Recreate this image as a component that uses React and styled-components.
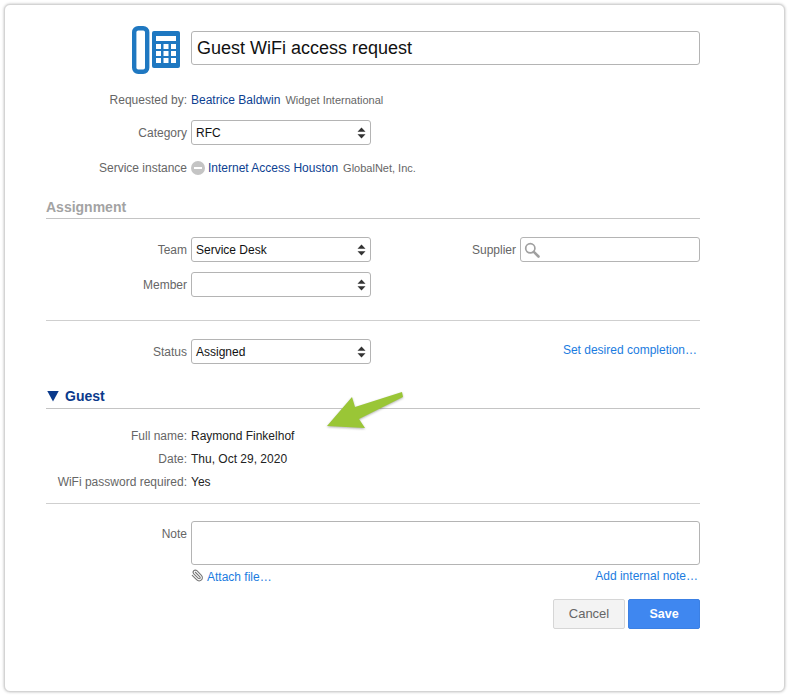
import React from 'react';
import styled, { createGlobalStyle } from 'styled-components';
import { Paperclip } from 'lucide-react';

const GlobalStyle = createGlobalStyle`
  html, body {
    margin: 0;
    background: #fff;
    font-family: "Liberation Sans", Arial, sans-serif;
    font-size: 12px;
    color: #222;
  }
`;

const Page = styled.div`
  padding: 4px;
  width: 790px;
  box-sizing: border-box;
`;

const Card = styled.div`
  position: relative;
  box-sizing: border-box;
  width: 781px;
  height: 688px;
  padding: 21px 0 0 41px;
  background: #fff;
  border: 1px solid #d4d4d4;
  border-radius: 6px;
  box-shadow: 0 0 3px rgba(0, 0, 0, 0.28);
`;

const Content = styled.div`
  width: 654px;
`;

const TitleRow = styled.div`
  display: flex;
  align-items: flex-start;
  padding-left: 86px;
  gap: 11px;
`;

const TitleInput = styled.div`
  flex: 1;
  box-sizing: border-box;
  height: 34px;
  margin-top: 5px;
  padding: 0 5px;
  display: flex;
  align-items: center;
  border: 1px solid #b4b4b4;
  border-radius: 3px;
  font-size: 18px;
  color: #111;
`;

const Row = styled.div`
  display: flex;
  align-items: ${(p) => p.$align || 'center'};
  min-height: 20px;
  margin-top: ${(p) => p.$top}px;
`;

const Label = styled.div`
  flex: none;
  width: 141px;
  margin-right: 4px;
  padding-top: ${(p) => p.$drop || 0}px;
  text-align: right;
  color: #666;
  line-height: 20px;
  white-space: nowrap;
`;

const StrongLink = styled.span`
  color: #0d4191;
`;

const Org = styled.span`
  margin-left: 5px;
  font-size: 11px;
  color: #666;
`;

const SelectBox = styled.div`
  box-sizing: border-box;
  width: 180px;
  height: 25px;
  padding: 0 4px;
  display: flex;
  align-items: center;
  justify-content: space-between;
  background: #fff;
  border: 1px solid #b4b4b4;
  border-radius: 3px;
  color: #111;
`;

const SectionHeading = styled.div`
  display: flex;
  align-items: center;
  box-sizing: border-box;
  height: 21px;
  margin-top: ${(p) => p.$top}px;
  padding-bottom: ${(p) => p.$lift || 2}px;
  border-bottom: 1px solid #c4c4c4;
  font-size: 14px;
  font-weight: bold;
  color: ${(p) => p.$color};
`;

const Caret = styled.span`
  flex: none;
  width: 12px;
  height: 11px;
  margin: 0 6px 0 1px;
  background: currentColor;
  clip-path: polygon(0 0, 100% 0, 50% 100%);
`;

const Divider = styled.div`
  height: 1px;
  margin-top: ${(p) => p.$top}px;
  background: #cfcfcf;
`;

const SupplierGroup = styled.div`
  margin-left: auto;
  display: flex;
  align-items: center;
`;

const SupplierLabel = styled.div`
  margin-right: 4px;
  color: #666;
`;

const SearchInput = styled.div`
  box-sizing: border-box;
  width: 180px;
  height: 25px;
  padding-left: 3px;
  display: flex;
  align-items: center;
  border: 1px solid #b4b4b4;
  border-radius: 3px;
`;

const ActionLink = styled.span`
  color: #1b7ce0;
  white-space: nowrap;
`;

const StatusAction = styled(ActionLink)`
  margin-left: auto;
  margin-right: 3px;
  margin-bottom: 3px;
`;

const ServiceIcon = styled.span`
  flex: none;
  width: 14px;
  height: 14px;
  margin-right: 3px;
  display: flex;
  align-items: center;
  justify-content: center;
  border-radius: 50%;
  background: #c4c4c4;
  &::after {
    content: '';
    width: 8px;
    height: 2px;
    background: #fff;
  }
`;

const Value = styled.span`
  color: #222;
`;

const NoteBox = styled.div`
  box-sizing: border-box;
  flex: 1;
  height: 44px;
  border: 1px solid #b4b4b4;
  border-radius: 3px;
`;

const AttachRow = styled.div`
  display: flex;
  align-items: center;
  justify-content: space-between;
  height: 20px;
  margin-top: 2px;
  padding-left: 145px;
`;

const AttachLink = styled.div`
  display: flex;
  align-items: center;
  gap: 3px;
  svg {
    transform: scaleX(-1);
    color: #777;
    margin-top: -3px;
  }
`;

const NoteAction = styled(ActionLink)`
  margin-right: 2px;
  margin-bottom: 2px;
`;

const Buttons = styled.div`
  display: flex;
  justify-content: flex-end;
  gap: 3px;
  margin-top: 12px;
`;

const Button = styled.button`
  box-sizing: border-box;
  width: 72px;
  height: 30px;
  padding: 0 0 1px;
  border-radius: 2px;
  font-family: inherit;
  font-size: ${(p) => (p.$primary ? 12.5 : 13)}px;
  font-weight: ${(p) => (p.$primary ? 'bold' : 'normal')};
  color: ${(p) => (p.$primary ? '#fff' : '#666')};
  background: ${(p) => (p.$primary ? '#3f87f0' : '#f3f3f3')};
  border: 1px solid ${(p) => (p.$primary ? '#3b80e4' : '#d6d6d6')};
`;

const ArrowOverlay = styled.svg`
  position: absolute;
  left: 317px;
  top: 381px;
  filter: drop-shadow(0 1px 1px rgba(60, 60, 60, 0.4));
`;

const Chevrons = () => (
  <svg width="9" height="12" viewBox="0 0 9 12">
    <path d="M4.5 0.5 L8.5 4.8 H0.5 Z M4.5 11.5 L0.5 7.2 H8.5 Z" fill="#333" />
  </svg>
);

const Select = ({ children }) => (
  <SelectBox>
    <span>{children}</span>
    <Chevrons />
  </SelectBox>
);

const PhoneIcon = () => (
  <svg width="48" height="48" viewBox="0 0 48 48">
    <rect x="2.2" y="2.2" width="13" height="43.6" rx="4" fill="none" stroke="#1f78c1" strokeWidth="4.4" />
    <rect x="20" y="5" width="28" height="37" rx="2" fill="#1f78c1" />
    <rect x="24" y="10" width="20" height="5" fill="#fff" />
    {[18, 25, 32].map((y) =>
      [24, 31.5, 39].map((x) => <rect key={`${x}-${y}`} x={x} y={y} width="5" height="5" fill="#fff" />)
    )}
  </svg>
);

const SearchIcon = () => (
  <svg width="16" height="16" viewBox="0 0 16 16" fill="none" stroke="#a0a0a0">
    <circle cx="6.3" cy="6.3" r="4.6" strokeWidth="1.7" />
    <path d="M9.8 9.8 L14.5 14.5" strokeWidth="2.6" strokeLinecap="round" />
  </svg>
);

const GuestArrow = () => (
  <ArrowOverlay width="90" height="52" viewBox="0 0 90 52">
    <path d="M5 40 L30 11 L33 21 L80 6 L81 11 L37 33 L43 42 Z" fill="#9ac636" />
  </ArrowOverlay>
);

const App = () => {
  return (
    <>
      <GlobalStyle />
      <Page>
        <Card>
          <Content>
            <TitleRow>
              <PhoneIcon />
              <TitleInput>Guest WiFi access request</TitleInput>
            </TitleRow>

            <Row $top={16}>
              <Label>Requested by:</Label>
              <StrongLink>Beatrice Baldwin</StrongLink>
              <Org>Widget International</Org>
            </Row>
            <Row $top={10}>
              <Label>Category</Label>
              <Select>RFC</Select>
            </Row>
            <Row $top={13}>
              <Label>Service instance</Label>
              <ServiceIcon />
              <StrongLink>Internet Access Houston</StrongLink>
              <Org>GlobalNet, Inc.</Org>
            </Row>

            <SectionHeading $top={20} $color="#a3a3a3">Assignment</SectionHeading>
            <Row $top={18}>
              <Label>Team</Label>
              <Select>Service Desk</Select>
              <SupplierGroup>
                <SupplierLabel>Supplier</SupplierLabel>
                <SearchInput>
                  <SearchIcon />
                </SearchInput>
              </SupplierGroup>
            </Row>
            <Row $top={10}>
              <Label>Member</Label>
              <Select />
            </Row>

            <Divider $top={23} />
            <Row $top={18}>
              <Label>Status</Label>
              <Select>Assigned</Select>
              <StatusAction>Set desired completion…</StatusAction>
            </Row>

            <SectionHeading $top={24} $lift={4} $color="#0a3a8c">
              <Caret />Guest
            </SectionHeading>
            <Row $top={17}>
              <Label>Full name:</Label>
              <Value>Raymond Finkelhof</Value>
            </Row>
            <Row $top={3}>
              <Label>Date:</Label>
              <Value>Thu, Oct 29, 2020</Value>
            </Row>
            <Row $top={3}>
              <Label>WiFi password required:</Label>
              <Value>Yes</Value>
            </Row>

            <Divider $top={11} />
            <Row $top={17} $align="flex-start">
              <Label $drop={3}>Note</Label>
              <NoteBox />
            </Row>
            <AttachRow>
              <AttachLink>
                <Paperclip size={13} />
                <ActionLink>Attach file…</ActionLink>
              </AttachLink>
              <NoteAction>Add internal note…</NoteAction>
            </AttachRow>
            <Buttons>
              <Button>Cancel</Button>
              <Button $primary>Save</Button>
            </Buttons>
          </Content>
          <GuestArrow />
        </Card>
      </Page>
    </>
  );
};

export default App;
